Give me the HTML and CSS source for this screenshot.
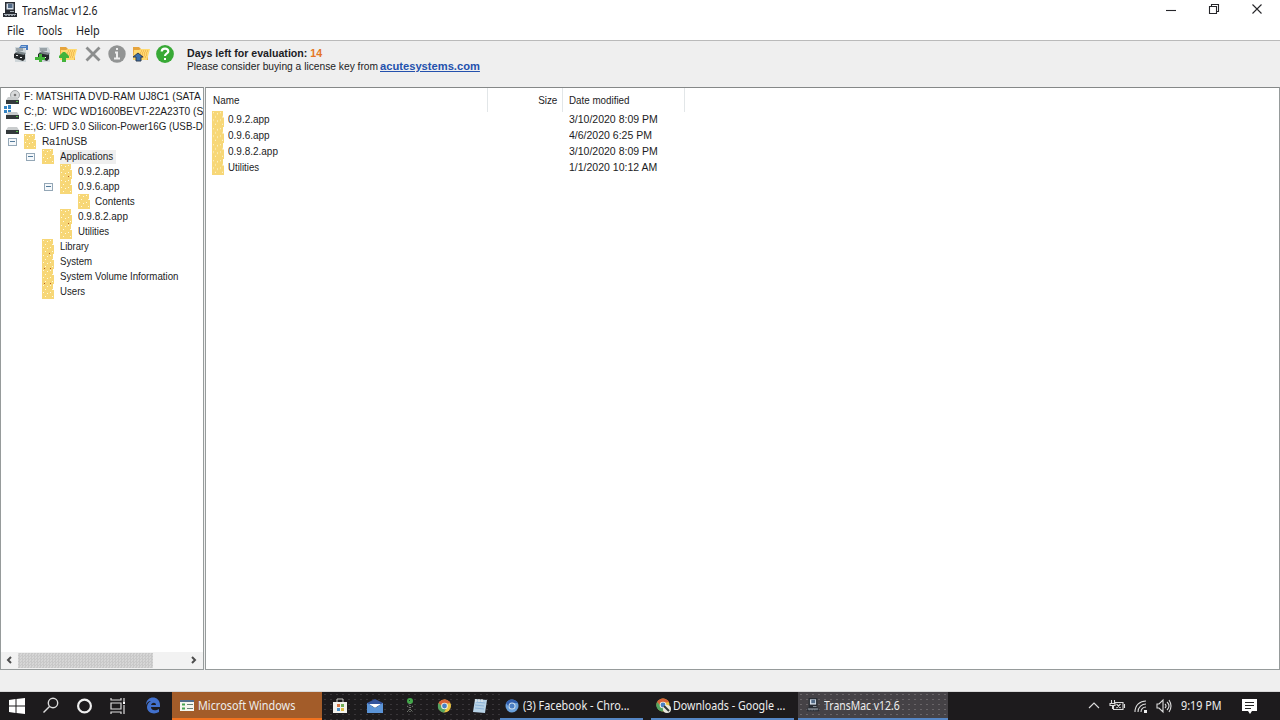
FILE: index.html
```html
<!DOCTYPE html>
<html lang="en">
<head>
<meta charset="utf-8">
<title>TransMac v12.6</title>
<link rel="stylesheet" href="styles.css">
</head>
<body>
<svg class="defs" width="0" height="0" aria-hidden="true">
<defs>
<pattern id="specks" width="7" height="7" patternUnits="userSpaceOnUse"><path fill="#fffbe0" d="M1 1h1v1H1zM5 2h1v1H5zM3 5h1v1H3z"/></pattern>
<symbol id="folder" viewBox="0 0 13 15" preserveAspectRatio="none"><path fill="#f7d777" d="M0 0h11v6h1v9H0z"/><path fill="url(#specks)" d="M1 1h10v13H1z"/></symbol>
<symbol id="mac" viewBox="0 0 16 16"><path fill="#292d34" d="M3 0h10v11H3zM1 11h14v4H1z"/><path fill="#d9e2ed" d="M4.500 1.500h7v6h-7z"/><path fill="#536b87" d="M6 2h4.500v4H6z"/><path fill="#a8b0b8" d="M8 9h4v1H8zM2 12h12v1H2z"/><path fill="#8f969e" d="M3 13h2v1H3zM6 13h2v1H6zM9 13h2v1H9zM12 13h1v1h-1z"/></symbol>
<symbol id="disk" viewBox="0 0 14 7"><path fill="#c9cccd" d="M2 0h9l2 3H0z"/><path fill="#34393b" d="M0 3h13v4H0z"/><path fill="#55bd48" d="M10 4h2v1h-2z"/></symbol>
<symbol id="image" viewBox="0 0 18 18"><path fill="#cfd6d9" d="M4 2h9l2 3v12H4z"/><path fill="#9aa3a8" d="M5 3h7v3H5z"/><path fill="#25292b" d="m3 9 3-2 8 2v5l-2 2-9-3z"/><path fill="#7c868a" d="m4 8 3-2 8 2-2 2z"/><path fill="#eee" d="M5 10h2v1H5zM9 12h2v1H9z"/></symbol>
<symbol id="yellow" viewBox="0 0 18 18"><path fill="#e6a43d" d="M1 2h6l2 2h7v11H1z"/><path fill="#ffda70" d="M2 5h5l2-1h9l-3 11H1z"/><path d="M9 6h8M8 8h8M8 10h8M7 12h8" stroke="#e99f3c" stroke-dasharray="1 1"/></symbol>
<symbol id="chrome" viewBox="0 0 14 14"><circle cx="7" cy="7" r="6.500" fill="#e9c344"/><path fill="#d76338" d="M1 4a7 7 0 0 1 12 0L7 5 4 8z"/><path fill="#54a461" d="M1 4a6.500 6.500 0 0 0 5.500 9.500L9 9 5 8z"/><circle cx="7" cy="7" r="3.300" fill="#f5f3e8"/><circle cx="7" cy="7" r="2.400" fill="#477fc6"/></symbol>
</defs>
</svg>
<div class="window">
<header class="titlebar">
  <svg class="app-icon" width="16" height="16"><use href="#mac"/></svg>
  <span class="ui title">TransMac v12.6</span>
  <div class="controls">
    <svg width="12" height="12"><path d="M1 7.500h10"/></svg>
    <svg width="12" height="12"><path d="M1.500 3.500h7v7h-7zM3.500 3V1.500h7v7H9"/></svg>
    <svg width="12" height="12"><path d="m1.500 1.500 9 9m0-9-9 9"/></svg>
  </div>
</header>
<nav class="menu"><span class="ui file">File</span><span class="ui tools">Tools</span><span class="ui help">Help</span></nav>
<section class="toolbar">
  <div class="tools-row">
    <svg width="18" height="18"><use href="#image"/><path fill="#497cc0" d="M8 3 10 0h7v5h-2V3z"/><path fill="#9abbe1" d="M9 2 11 1h4v1z"/></svg>
    <svg width="18" height="18"><use href="#image"/><path fill="#43b43a" d="M4 9h3v3h3v3H7v2H4v-2H0v-3h4z"/></svg>
    <svg width="18" height="18"><use href="#yellow"/><path fill="#43b43a" d="M4 7h2l4 4v2H7v4H3v-4H0v-2z"/></svg>
    <svg width="18" height="18"><path d="m2.500 2.500 13 13M15.500 2.500l-13 13" stroke="#8c8e8e" stroke-width="2.800"/></svg>
    <svg width="18" height="18"><circle cx="9" cy="9" r="8.700" fill="#929494"/><path fill="none" stroke="#eee" stroke-width="2" d="M9 3v2M7 7.500h2V13M6 13.500h6"/></svg>
    <svg width="18" height="18"><use href="#yellow"/><path fill="#3a70ac" stroke="#303f51" d="m6 8 5 4H9v4H4v-4H1z"/></svg>
    <svg width="18" height="18"><circle cx="9" cy="9" r="8.900" fill="#38a936"/><path fill="none" stroke="#fff" stroke-width="2.200" d="M5.700 6.500c.2-4 6.800-3.600 6.600 0C12.200 8.500 9 8.300 9 11"/><path fill="#fff" d="M8 13h2v2H8z"/></svg>
  </div>
  <div class="license">
    <div><span class="legacy days">Days left for evaluation: <b>14</b></span></div>
    <div class="buy"><span class="legacy please">Please consider buying a license key from</span><span class="legacy link">acutesystems.com</span></div>
  </div>
</section>
<main class="panels">
  <aside class="sidebar">
    <div class="tree">
      <div class="row drive"><svg width="15" height="14"><circle cx="9" cy="5" r="4.500" fill="#d8dadb" stroke="#a0a4a6"/><circle cx="9" cy="5" r="1.300" fill="#777"/><use href="#disk" y="7" width="14" height="7"/></svg><span class="legacy drive-text">F: MATSHITA DVD-RAM UJ8C1 (SATA</span></div>
      <div class="row drive"><svg class="system-disk" width="17" height="14"><path fill="#3585c4" d="M0 1h3v3H0zM4 0h3v4H4zM0 5h3v3H0zM4 5h3v3H4z"/><use href="#disk" x="2" y="7" width="14" height="7"/></svg><span class="legacy drive-text">C:,D:&nbsp; WDC WD1600BEVT-22A23T0 (S</span></div>
      <div class="row drive"><svg width="15" height="14"><use href="#disk" y="7" width="14" height="7"/></svg><span class="legacy drive-text edrive">E:,G: UFD 3.0 Silicon-Power16G (USB-D</span></div>
      <div class="row level-0"><i class="expander"></i><svg class="folder"><use href="#folder"/></svg><span class="legacy usb">Ra1nUSB</span></div>
      <div class="row level-1"><i class="expander"></i><svg class="folder"><use href="#folder"/></svg><span class="selected"><span class="legacy apps-text">Applications</span></span></div>
      <div class="row level-2"><i class="spacer"></i><svg class="folder"><use href="#folder"/><path fill="#b75b25" d="M8 12h1v1H8z"/></svg><span class="legacy version">0.9.2.app</span></div>
      <div class="row level-2"><i class="expander"></i><svg class="folder"><use href="#folder"/></svg><span class="legacy version">0.9.6.app</span></div>
      <div class="row level-3"><i class="spacer"></i><svg class="folder"><use href="#folder"/></svg><span class="legacy contents">Contents</span></div>
      <div class="row level-2"><i class="spacer"></i><svg class="folder"><use href="#folder"/><path fill="#b75b25" d="M8 14h1v1H8z"/></svg><span class="legacy version">0.9.8.2.app</span></div>
      <div class="row level-2"><i class="spacer"></i><svg class="folder"><use href="#folder"/></svg><span class="legacy word">Utilities</span></div>
      <div class="row level-1"><i class="spacer"></i><svg class="folder"><use href="#folder"/><path fill="#b75b25" d="M7 14h1v1H7z"/></svg><span class="legacy library">Library</span></div>
      <div class="row level-1"><i class="spacer"></i><svg class="folder"><use href="#folder"/><path fill="#b75b25" d="M2 14h1v1H2zM8 14h1v1H8z"/></svg><span class="legacy word">System</span></div>
      <div class="row level-1"><i class="spacer"></i><svg class="folder"><use href="#folder"/><path fill="#b75b25" d="M2 14h1v1H2zM8 14h1v1H8z"/></svg><span class="legacy volume">System Volume Information</span></div>
      <div class="row level-1"><i class="spacer"></i><svg class="folder"><use href="#folder"/></svg><span class="legacy word">Users</span></div>
    </div>
    <div class="scroll"><svg width="17" height="16"><path d="m10 5-3 3 3 3"/></svg><div class="track"><div class="thumb"></div></div><svg width="17" height="16"><path d="m6 5 3 3-3 3"/></svg></div>
  </aside>
  <section class="list">
    <div class="grid heading"><div><span class="legacy name">Name</span></div><div class="size"><span class="legacy size-text">Size</span></div><div><span class="legacy modified">Date modified</span></div></div>
    <div class="grid item"><div><svg class="folder"><use href="#folder"/></svg><span class="legacy version">0.9.2.app</span></div><div></div><div><span class="legacy date">3/10/2020 8:09 PM</span></div></div>
    <div class="grid item"><div><svg class="folder"><use href="#folder"/></svg><span class="legacy version">0.9.6.app</span></div><div></div><div><span class="legacy date">4/6/2020 6:25 PM</span></div></div>
    <div class="grid item"><div><svg class="folder"><use href="#folder"/></svg><span class="legacy version">0.9.8.2.app</span></div><div></div><div><span class="legacy date">3/10/2020 8:09 PM</span></div></div>
    <div class="grid item"><div><svg class="folder"><use href="#folder"/></svg><span class="legacy word">Utilities</span></div><div></div><div><span class="legacy date">1/1/2020 10:12 AM</span></div></div>
  </section>
</main>
<div class="status"></div>
<footer class="taskbar">
  <div class="launch start">
    <svg width="18" height="18"><path fill="#fff" d="m1 3 6.500-1v6.500H1zM8.500 2 17 1v7.500H8.500zM1 9.500h6.500V16L1 15zM8.500 9.500H17V17l-8.500-1z"/></svg>
    <svg width="18" height="18"><g fill="none" stroke="#ddd" stroke-width="1.400"><circle cx="11" cy="6" r="4.700"/><path d="m7.500 9.500-6 6"/></g></svg>
    <svg width="18" height="18"><circle cx="8.500" cy="9" r="6.400" fill="none" stroke="#eee" stroke-width="2.200"/></svg>
    <svg width="18" height="18"><g fill="none" stroke="#ddd" stroke-width="1.200"><path d="M1 1v2h10V1M1 6h10v6H1zM1 17v-2h10v2M14 1v4m0 3v9"/></g><path fill="#fff" d="M13 5h2v2h-2z"/></svg>
    <svg width="18" height="18"><path fill="#4271cd" d="M2 8c0-10 14-10 14 0v2H7c0 4 5 4 8 2v3c-5 3-12 1-12-5 0-3 2-5 4-6-3 0-4 2-5 4zm5 0h5c0-3-4-3-5 0z"/></svg>
  </div>
  <div class="task orange"><svg width="15" height="13"><path fill="#f4f6ef" d="M0 1h14v11H0z"/><path fill="#506e8c" d="M0 1h14v2H0z"/><path stroke="#698275" d="M7 5.500h6M7 9.500h6"/><path stroke="#45a350" stroke-width="2" d="M2 5.500h3M2 9.500h3"/></svg><span class="ui windows">Microsoft Windows</span></div>
  <div class="launch apps">
    <svg width="18" height="18"><path fill="#f2f2ed" d="M2 5h14v11H2z"/><path fill="none" stroke="#c6c6c2" d="M6 5V2h6v3"/><path fill="#d67442" d="M6 7h3v3H6z"/><path fill="#70ae55" d="M10 7h3v3h-3z"/><path fill="#4b91ca" d="M6 11h3v3H6z"/><path fill="#dfbb45" d="M10 11h3v3h-3z"/></svg>
    <svg width="18" height="18"><path fill="#33549c" d="m1 6 8-4 8 4v3H1z"/><path fill="#fff" d="M3 7h12l-6 4z"/><path fill="#5b94d7" d="m1 6 8 5 8-5v10H1z"/></svg>
    <svg width="18" height="18"><circle cx="9" cy="4" r="3" fill="#43a84a"/><path stroke="#91998d" fill="none" stroke-dasharray="1 1" d="M9 6v10M6 9l3 2 3-2m-6 6 3-3 3 3"/><path fill="#173e20" d="M8 3h1v1H8z"/></svg>
    <svg width="18" height="18"><use href="#chrome" x="1.500" y="2" width="14" height="14"/></svg>
    <svg width="18" height="18"><path fill="#b7d2e6" d="m4 2 12 1-2 13-12-1z"/><path d="m5 5 9 1M4 8l9 1M4 11l9 1" stroke="#8db4d9"/><path d="M5 2v3M8 2v3M11 2v3" stroke="#eee"/></svg>
  </div>
  <div class="task facebook"><svg width="14" height="14"><circle cx="7" cy="7" r="6.500" fill="#6ba1dc"/><path fill="#315fae" d="M1 4a7 7 0 0 1 12 0H7L4 8z"/><circle cx="7" cy="7" r="3.500" fill="#d0e1ef"/><circle cx="7" cy="7" r="2.500" fill="#4b7ec3"/></svg><span class="ui fb-text">(3) Facebook - Chro...</span></div>
  <div class="task downloads"><svg width="15" height="15"><use href="#chrome" width="14" height="14"/><circle cx="11" cy="11" r="4" fill="#e9e9df"/><path stroke="#30383a" stroke-width="2" d="m8 8 5 5"/></svg><span class="ui dl-text">Downloads - Google ...</span></div>
  <div class="task current"><svg width="15" height="15"><use href="#mac" width="14" height="14"/></svg><span class="ui tm-text">TransMac v12.6</span></div>
  <div class="tray">
    <svg width="14" height="16"><path d="m2 10 5-5 5 5"/></svg>
    <svg width="17" height="16"><path d="M6 4.500h8v7H4.500V8M15.500 6v4M2.500 2v3m3-3v3M1 5.500h5v2H1zM3.500 8v3m4-5 4 4m0-4-4 4"/></svg>
    <svg width="14" height="16"><path d="M1 14C1 7 6 3 12 3M4 14c0-5 4-8 8-8M7 14c0-3 2-5 5-5"/><path fill="#eee" stroke="none" d="M10 12h3v3h-3z"/></svg>
    <svg width="16" height="16"><path d="M1 6h2l4-4v12l-4-4H1zM9 6q2 2 0 4m2-6q4 4 0 8m2-10q4 6 0 12"/></svg>
    <span class="ui clock">9:19 PM</span>
    <svg class="notice" width="17" height="17"><path fill="#fff" stroke="none" d="M1 1h15v12h-5l-2 3-2-3H1z"/><path stroke="#242424" d="M4 4.500h9M4 7.500h9M4 10.500h6"/></svg>
  </div>
</footer>
</div>
</body>
</html>
```
FILE: styles.css
```css
* { box-sizing: border-box; }
body { margin: 0; background: #fff; }
svg { display: block; flex: none; }
.defs { position: absolute; }
.window { width: 1280px; height: 720px; display: flex; flex-direction: column; overflow: hidden; color: #1c1c24; }
.ui, .legacy { display: inline-block; flex: none; white-space: nowrap; transform-origin: left center; }
.ui { font-family: "Noto Sans", sans-serif; font-size: 12px; line-height: 16px; transform: scaleX(.905); }
.legacy { font-family: "Liberation Sans", Arial, sans-serif; font-size: 11.5px; line-height: 15px; transform: scaleX(.86); }
.titlebar { height: 21px; display: flex; padding: 2px 17px 0 2px; }
.title { margin-left: 4px; line-height: 18px; transform: scaleX(.865); }
.controls { display: flex; gap: 31px; margin-left: auto; padding-top: 1px; }
.controls svg { fill: none; stroke: #26262a; stroke-width: 1.1; }
.menu { height: 19px; display: grid; grid-template-columns: 30px 39px 50px; padding: 2px 0 0 7px; }
.tools { transform: scaleX(.86); }
.toolbar { height: 47px; background: #efefef; border-top: 1px solid #bababa; display: flex; padding: 4px 11px; }
.tools-row { width: 176px; display: flex; gap: 6.2px; }
.license { padding-top: 2px; }
.license > div { height: 13px; display: flex; align-items: center; }
.license .legacy { font-size: 11px; }
.license .days { font-weight: bold; transform: scaleX(.965); }
.days b { color: #e47625; }
.license .please { width: 193px; transform: scaleX(.93); }
.license .link { color: #2451ad; font-weight: bold; text-decoration: underline; transform: scaleX(1.015); }
.panels { height: 583px; display: grid; grid-template-columns: 204px 1075px; gap: 1px; background: #efefef; }
.sidebar, .list { border: 1px solid #969b9b; border-top-color: #858888; background: #fff; overflow: hidden; }
.sidebar { display: flex; flex-direction: column; }
.tree { flex: 1; padding-top: 1px; }
.row { height: 15px; display: flex; align-items: center; }
.folder { width: 13px; height: 15px; }
.expander, .spacer { width: 9px; height: 9px; margin-right: 7px; flex: none; }
.expander { height: 8px; border: 1px solid #94a7b6; background: linear-gradient(#557c9b, #557c9b) center / 5px 1px no-repeat, #f5f8fb; }
.level-0 { padding-left: 7px; }
.level-1 { padding-left: 25px; }
.level-2 { padding-left: 43px; }
.level-3 { padding-left: 61px; }
.row .folder { margin-right: 5px; }
.drive { padding-left: 5px; }
.drive svg { margin-right: 3px; }
.drive .system-disk { margin: 0 3px 0 -2px; }
.drive-text { transform: scaleX(.885); }
.edrive { transform: scaleX(.85); }
.usb { transform: scaleX(.885); }
.word { transform: scaleX(.838); }
.apps-text { transform: scaleX(.856); }
.library { transform: scaleX(.82); }
.volume { transform: scaleX(.842); }
.version { transform: scaleX(.868); }
.contents { margin-left: -1px; transform: scaleX(.86); }
.selected { width: 56px; height: 14px; background: #efefef; display: flex; align-items: center; }
.scroll { height: 17px; display: flex; background: #f2f2f2; }
.scroll > svg { fill: none; stroke: #4d4d4d; stroke-width: 2; }
.track { flex: 1; }
.thumb { width: 135px; height: 15px; margin-top: 1px; background: repeating-conic-gradient(#c8c8c8 0 25%, #d6d6d6 0 50%) 0 0 / 3px 3px; }
.list { padding: 0 0 0 6px; }
.grid { display: grid; grid-template-columns: 276px 75px 122px; }
.grid > div { display: flex; align-items: center; }
.heading { height: 24px; margin-bottom: -1px; }
.heading > div { height: 24px; border-right: 1px solid #e2e6e8; }
.name { margin-left: .5px; }
.heading > .size { justify-content: flex-end; padding-right: 5px; }
.grid > div:last-child { padding-left: 6px; }
.item { height: 16px; }
.item .folder { height: 16px; margin-right: 2.5px; }
.size-text { transform-origin: right center; }
.modified { transform: scaleX(.853); }
.date { transform: scaleX(.913); }
.status { height: 22px; background: #efefef; border-bottom: 1px solid #d8d8d8; }
.taskbar { height: 28px; display: flex; background: #1d1b1d; color: #ededed; }
.launch { display: flex; align-items: center; }
.start { width: 172px; gap: 16px; padding-left: 8px; }
.apps { width: 178px; gap: 17px; padding-left: 9px; background: radial-gradient(circle, #393639 .5px, transparent .7px) 0 0 / 6px 5px; }
.task { display: flex; align-items: center; gap: 5px; padding-left: 5px; border-bottom: 2px solid #5586c5; }
.task svg { margin-top: 1px; }
.task .ui { line-height: 24px; padding-top: 1px; }
.orange { width: 150px; padding-left: 8px; gap: 3px; background: #a35c29; border-color: #f2721f; }
.facebook { width: 143px; gap: 4px; }
.downloads { width: 143px; margin-left: 8px; gap: 2px; }
.task .dl-text { transform: scaleX(.89); }
.current { width: 150px; margin-left: 4px; padding-left: 8px; gap: 3px; background: radial-gradient(circle, #696568 .5px, transparent .7px) 0 0 / 6px 5px, #454246; }
.task .tm-text { transform: scaleX(.87); }
.tray { width: 332px; display: flex; align-items: center; padding-left: 139px; }
.tray svg { fill: none; stroke: #ddd; stroke-width: 1.1; margin-right: 8px; }
.tray .clock { width: 60px; margin-left: 1px; transform: scaleX(.9); }
.tray .notice { margin: 0; }
```
